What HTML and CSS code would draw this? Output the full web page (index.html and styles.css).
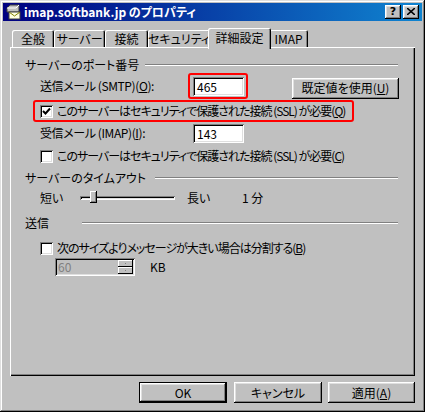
FILE: index.html
```html
<!DOCTYPE html>
<html lang="ja">
<head>
<meta charset="utf-8">
<title>imap.softbank.jp のプロパティ</title>
<link rel="stylesheet" href="styles.css">
</head>
<body>
<div class="window">
  <div class="titlebar">
    <svg class="ticon" width="16" height="16" viewBox="0 0 16 16">
      <path d="M2 4 L5 1 L14 1 L14 8 L2 8 Z" fill="#c0c0c0" stroke="#404040" stroke-width="1"/>
      <path d="M2 4 L11 4 L14 1" fill="none" stroke="#ffffff" stroke-width="1"/>
      <rect x="4" y="8" width="11" height="7" fill="#ffffe0" stroke="#404040" stroke-width="1"/>
      <path d="M4 8 L9.5 12 L15 8" fill="none" stroke="#808000" stroke-width="1"/>
    </svg>
    <span class="ttext">imap.softbank.jp のプロパティ</span>
    <div class="tbtns">
      <span class="tbtn">?</span>
      <span class="tbtn tclose">
        <svg width="8" height="7" viewBox="0 0 8 7"><path d="M0 0 L8 7 M8 0 L0 7" stroke="#000" stroke-width="1.6"/></svg>
      </span>
    </div>
  </div>

  <div class="tabs">
    <div class="tab tw1">全般</div>
    <div class="tab tw2">サーバー</div>
    <div class="tab tw3">接続</div>
    <div class="tab tw4">セキュリティ</div>
    <div class="tab tab-sel tw5">詳細設定</div>
    <div class="tab tw6">IMAP</div>
  </div>

  <div class="panel">
    <div class="grp g1">
      <span class="gtext">サーバーのポート番号</span>
      <span class="gline l1"></span>
    </div>

    <div class="row smtp">
      <span class="label lw1">送信メール (SMTP)(<u>O</u>):</span>
      <span class="redbox rb-input"><span class="edit">465</span></span>
      <span class="btn btn-default-val">既定値を使用(<u>U</u>)</span>
    </div>

    <div class="redbox rb-check">
      <span class="cb checked">
        <svg width="9" height="9" viewBox="0 0 9 9"><path d="M1 4 L3.5 6.5 L8 1.5" fill="none" stroke="#000" stroke-width="2"/></svg>
      </span>
      <span class="cbtext">このサーバーはセキュリティで保護された接続 (SSL) が必要(<u>Q</u>)</span>
    </div>

    <div class="row imap">
      <span class="label lw2">受信メール (IMAP)(<u>I</u>):</span>
      <span class="edit">143</span>
    </div>

    <div class="row cbrow cb2">
      <span class="cb"></span>
      <span class="cbtext">このサーバーはセキュリティで保護された接続 (SSL) が必要(<u>C</u>)</span>
    </div>

    <div class="grp g2">
      <span class="gtext">サーバーのタイムアウト</span>
      <span class="gline l2"></span>
    </div>

    <div class="row slider-row">
      <span class="label lw3">短い</span>
      <span class="slider">
        <span class="track"></span>
        <span class="thumb"></span>
      </span>
      <span class="label lw4">長い</span>
      <span class="label">1 分</span>
    </div>

    <div class="grp g3">
      <span class="gtext">送信</span>
      <span class="gline l3"></span>
    </div>

    <div class="row cbrow cb3">
      <span class="cb"></span>
      <span class="cbtext">次のサイズよりメッセージが大きい場合は分割する(<u>B</u>)</span>
    </div>

    <div class="row spin-row">
      <span class="spin">
        <span class="spinval">60</span>
        <span class="spinbtns">
          <span class="sbtn"><span class="sdot"></span></span>
          <span class="sbtn"><span class="sdot"></span></span>
        </span>
      </span>
      <span class="label kb">KB</span>
    </div>
  </div>

  <div class="buttons">
    <span class="btn bw ok">OK</span>
    <span class="btn bw cancel">キャンセル</span>
    <span class="btn bw apply">適用(<u>A</u>)</span>
  </div>
</div>
</body>
</html>
```

FILE: styles.css
```css
* { box-sizing: border-box; }
html, body { margin: 0; padding: 0; background: #c0c0c0; }
body {
  font-family: "Noto Sans CJK JP", "Noto Sans", sans-serif;
  font-size: 12px;
  font-feature-settings: "palt";
  color: #000;
  line-height: 14px;
}
u { text-decoration: underline; text-underline-offset: 1px; }

.window {
  width: 425px;
  height: 412px;
  padding: 3px;
  background: #c0c0c0;
  box-shadow: inset -1px -1px #000, inset 1px 1px #dfdfdf, inset -2px -2px #808080, inset 2px 2px #fff;
  display: flex;
  flex-direction: column;
}

.titlebar {
  height: 18px;
  background: linear-gradient(to right, #000080, #1084d0);
  display: flex;
  align-items: center;
  padding: 0 3px 0 2px;
  color: #fff;
}
.ticon { flex: none; }
.ttext {
  margin-left: 3px;
  font-weight: bold;
  font-size: 12px;
  white-space: nowrap;
}
.tbtns { margin-left: auto; display: flex; gap: 2px; }
.tbtn {
  width: 16px;
  height: 14px;
  background: #c0c0c0;
  box-shadow: inset -1px -1px #000, inset 1px 1px #fff, inset -2px -2px #808080, inset 2px 2px #dfdfdf;
  color: #000;
  font-family: "DejaVu Sans", sans-serif;
  font-weight: bold;
  font-size: 11px;
  line-height: 14px;
  display: flex;
  align-items: center;
  justify-content: center;
  padding-bottom: 1px;
}

.tabs {
  margin-top: 7px;
  height: 19px;
  display: flex;
  align-items: flex-end;
  padding-left: 9px;
  position: relative;
  z-index: 2;
}
.tab {
  height: 17px;
  padding-top: 1px;
  text-align: center;
  white-space: nowrap;
  border-top-left-radius: 2px;
  border-top-right-radius: 2px;
  box-shadow: inset 1px 1px #fff, inset -1px 0 #000, inset -2px 0 #808080;
  line-height: 15px;
}
.tw1 { width: 42px; }
.tw2 { width: 51px; }
.tw3 { width: 43px; }
.tw4 { width: 62px; }
.tw5 { width: 63px; }
.tw6 { width: 39px; }
.tab-sel {
  height: 21px;
  margin: 0 -2px -2px -2px;
  padding-top: 2px;
  background: #c0c0c0;
  position: relative;
  z-index: 3;
}

.panel {
  margin-left: 7px;
  width: 405px;
  height: 329px;
  box-shadow: inset 1px 1px #fff, inset -1px -1px #000, inset -2px -2px #808080;
  display: flex;
  flex-direction: column;
  align-items: flex-start;
  position: relative;
  z-index: 1;
}

.grp {
  display: flex;
  align-items: center;
  height: 14px;
  width: 388px;
  padding-left: 15px;
}
.gtext { white-space: nowrap; }
.gline {
  margin-left: auto;
  height: 2px;
  border-top: 1px solid #808080;
  border-bottom: 1px solid #fff;
}
.l1 { width: 253px; }
.l2 { width: 243px; }
.l3 { width: 316px; }
.g1 { margin-top: 11px; }
.g2 { margin-top: 7px; }
.g3 { margin-top: 10px; }

.row { display: flex; align-items: center; }
.label { white-space: nowrap; }
.lw1, .lw2 { letter-spacing: -0.4px; }
.lw1 { width: 148px; }
.lw2 { width: 153px; }
.lw3 { width: 40px; }
.lw4 { width: 55px; margin-left: 12px; }

.smtp { margin-top: 1px; margin-left: 30px; height: 26px; }
.redbox {
  border: 2px solid #ff0000;
  border-radius: 3px;
  display: flex;
  align-items: center;
}
.rb-input { width: 60px; height: 26px; padding-left: 3px; }
.edit {
  width: 51px;
  height: 19px;
  background: #fff;
  box-shadow: inset 1px 1px #808080, inset -1px -1px #fff, inset 2px 2px #000, inset -2px -2px #dfdfdf;
  padding: 2px 0 0 4px;
  line-height: 15px;
  display: block;
}
.btn {
  height: 21px;
  background: #c0c0c0;
  box-shadow: inset -1px -1px #000, inset 1px 1px #fff, inset -2px -2px #808080, inset 2px 2px #dfdfdf;
  display: flex;
  align-items: center;
  justify-content: center;
  white-space: nowrap;
}
.btn-default-val { width: 107px; margin-left: 44px; margin-top: 4px; }

.rb-check {
  margin-top: 1px;
  margin-left: 23px;
  width: 321px;
  height: 22px;
  padding-left: 5px;
}
.cb {
  width: 13px;
  height: 13px;
  flex: none;
  background: #fff;
  box-shadow: inset 1px 1px #808080, inset -1px -1px #fff, inset 2px 2px #000, inset -2px -2px #dfdfdf;
  display: flex;
  align-items: center;
  justify-content: center;
}
.cbtext { margin-left: 4px; white-space: nowrap; letter-spacing: -1px; }

.imap { margin-top: 1px; margin-left: 30px; height: 20px; }
.cbrow { height: 16px; margin-left: 30px; }
.cb2 { margin-top: 5px; }
.cb3 { margin-top: 10px; }

.slider-row { margin-top: 5px; margin-left: 30px; height: 16px; }
.slider {
  width: 95px;
  height: 16px;
  position: relative;
  display: flex;
  align-items: center;
}
.track {
  width: 95px;
  height: 4px;
  box-shadow: inset 1px 1px #808080, inset -1px -1px #fff, inset 2px 2px #000, inset -2px -2px #dfdfdf;
}
.thumb {
  position: absolute;
  left: 10px;
  top: 1px;
  width: 7px;
  height: 12px;
  background: #c0c0c0;
  box-shadow: inset -1px -1px #000, inset 1px 1px #fff, inset -2px -2px #808080;
}

.spin-row { margin-top: 2px; margin-left: 45px; height: 18px; }
.spin {
  width: 80px;
  height: 18px;
  display: flex;
  align-items: center;
  box-shadow: inset 1px 1px #808080, inset -1px -1px #fff, inset 2px 2px #000, inset -2px -2px #dfdfdf;
  padding: 2px 2px 2px 3px;
}
.spinval { color: #808080; flex: 1; line-height: 14px; }
.spinbtns { display: flex; flex-direction: column; width: 15px; height: 14px; }
.sbtn {
  height: 7px;
  background: #c0c0c0;
  box-shadow: inset -1px -1px #000, inset 1px 1px #fff;
  display: flex;
  align-items: center;
  justify-content: center;
}
.sdot { width: 1px; height: 1px; background: #808080; }
.kb { margin-left: 15px; }

.buttons {
  margin-top: 6px;
  display: flex;
  justify-content: flex-end;
  padding-right: 7px;
}
.bw { width: 88px; }
.ok { box-shadow: inset 0 0 0 1px #000, inset -2px -2px #000, inset 2px 2px #fff, inset -3px -3px #808080, inset 3px 3px #dfdfdf; }
.cancel { margin-left: 7px; }
.apply { margin-left: 6px; width: 87px; }
```
